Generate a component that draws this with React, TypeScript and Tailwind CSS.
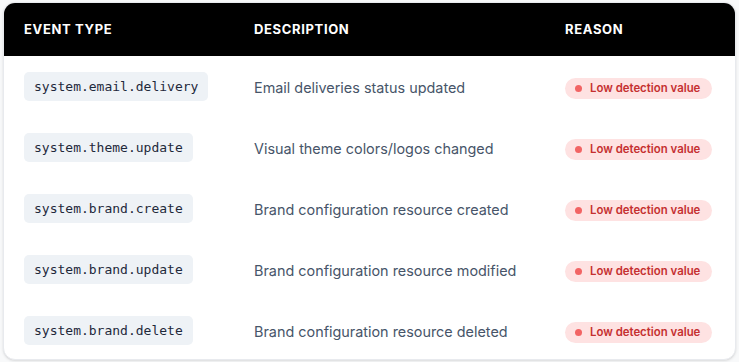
const rows = [
  { type: "system.email.delivery", desc: "Email deliveries status updated" },
  { type: "system.theme.update", desc: "Visual theme colors/logos changed" },
  { type: "system.brand.create", desc: "Brand configuration resource created" },
  { type: "system.brand.update", desc: "Brand configuration resource modified" },
  { type: "system.brand.delete", desc: "Brand configuration resource deleted" },
];

const App = () => {
  return (
    <div className="w-[739px] h-[362px] bg-[#f8f9fa] p-[2px_3px] font-['Inter',sans-serif]">
      <div className="h-[358px] rounded-xl bg-white border border-[#e8eaee] shadow-sm overflow-hidden">
        {/* header */}
        <div className="grid grid-cols-[230px_311px_1fr] h-[53px] items-center bg-black text-white text-[13px] font-bold uppercase tracking-[0.05em]">
          <div className="pl-5 pt-px">Event Type</div>
          <div className="pl-5 pt-px">Description</div>
          <div className="pl-5 pt-px">Reason</div>
        </div>

        {rows.map((row) => (
          <div key={row.type} className="grid grid-cols-[230px_311px_1fr] h-[61px] items-center">
            <div className="pl-5">
              <span className="inline-block rounded-[5px] bg-[#eef2f6] px-[10px] py-[5px] font-['DejaVu_Sans_Mono',monospace] text-[13px] leading-[19px] text-[#1e293b]">
                {row.type}
              </span>
            </div>
            <div className="pl-5 pt-[2px] text-[14.4px] text-[#475569]">{row.desc}</div>
            <div className="pl-5">
              <span className="inline-flex items-center gap-[8px] rounded-full bg-[#fee2e2] h-[21px] pl-[10px] pr-[12px] text-[11.4px] font-semibold text-[#c53030]">
                <span className="w-[7px] h-[7px] rounded-full bg-[#f26464]" />
                Low detection value
              </span>
            </div>
          </div>
        ))}
      </div>
    </div>
  );
};

export default App;
